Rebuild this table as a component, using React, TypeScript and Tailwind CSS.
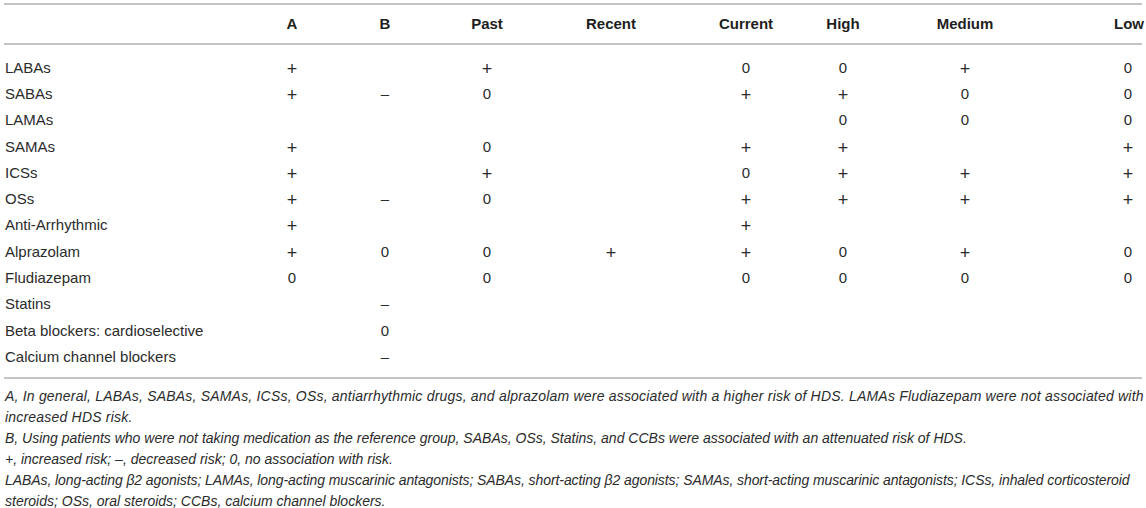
import React from "react";

const headers = ["A", "B", "Past", "Recent", "Current", "High", "Medium", "Low"];

const rows: [string, string[]][] = [
  ["LABAs", ["+", "", "+", "", "0", "0", "+", "0"]],
  ["SABAs", ["+", "–", "0", "", "+", "+", "0", "0"]],
  ["LAMAs", ["", "", "", "", "", "0", "0", "0"]],
  ["SAMAs", ["+", "", "0", "", "+", "+", "", "+"]],
  ["ICSs", ["+", "", "+", "", "0", "+", "+", "+"]],
  ["OSs", ["+", "–", "0", "", "+", "+", "+", "+"]],
  ["Anti-Arrhythmic", ["+", "", "", "", "+", "", "", ""]],
  ["Alprazolam", ["+", "0", "0", "+", "+", "0", "+", "0"]],
  ["Fludiazepam", ["0", "", "0", "", "0", "0", "0", "0"]],
  ["Statins", ["", "–", "", "", "", "", "", ""]],
  ["Beta blockers: cardioselective", ["", "0", "", "", "", "", "", ""]],
  ["Calcium channel blockers", ["", "–", "", "", "", "", "", ""]],
];

const gridCols =
  "grid grid-cols-[251px_74px_112px_92px_156px_114px_80px_164px_95px]";

function Val({ v }: { v: string }) {
  if (v === "+") {
    return <span className="text-[18px] leading-none align-[-2px]">+</span>;
  }
  return <>{v}</>;
}

function Cell({ v, last, header }: { v: string; last: boolean; header?: boolean }) {
  const content = header ? v : <Val v={v} />;
  if (last) {
    return (
      <div className="flex justify-end">
        <span className="w-[28px] text-center whitespace-nowrap">{content}</span>
      </div>
    );
  }
  return <div className="text-center whitespace-nowrap">{content}</div>;
}

export default function App() {
  return (
    <div
      className="bg-white w-[1146px] h-[508px] overflow-hidden text-[15px] text-[#2b2b2b]"
      style={{ fontFamily: '"Liberation Sans", Arial, Helvetica, sans-serif' }}
    >
      <div className="mx-[4px] mt-[3px] w-[1138px]">
        <div className="border-t-2 border-b-2 border-[#c4c4c4]">
          <div className={`${gridCols} h-[38px] items-center font-bold text-[#1e1e1e]`}>
            <div />
            {headers.map((h, i) => (
              <Cell key={h} v={h} header last={i === headers.length - 1} />
            ))}
          </div>
        </div>
        <div className="pt-[10px] pb-[7px] border-b-2 border-[#c4c4c4]">
          {rows.map(([label, vals]) => (
            <div key={label} className={`${gridCols} h-[26.27px] items-center`}>
              <div className="pl-px whitespace-nowrap">{label}</div>
              {vals.map((v, i) => (
                <Cell key={i} v={v} last={i === vals.length - 1} />
              ))}
            </div>
          ))}
        </div>
        <div className="pt-[7px] italic text-[14px] leading-[21px] pl-px whitespace-nowrap">
          <p className="tracking-[0.2px]">
            A, In general, LABAs, SABAs, SAMAs, ICSs, OSs, antiarrhythmic drugs, and alprazolam were associated with a higher risk of HDS. LAMAs Fludiazepam were not associated with
          </p>
          <p className="tracking-[0.2px]">increased HDS risk.</p>
          <p>
            B, Using patients who were not taking medication as the reference group, SABAs, OSs, Statins, and CCBs were associated with an attenuated risk of HDS.
          </p>
          <p>+, increased risk; –, decreased risk; 0, no association with risk.</p>
          <p className="tracking-[-0.08px]">
            LABAs, long-acting β2 agonists; LAMAs, long-acting muscarinic antagonists; SABAs, short-acting β2 agonists; SAMAs, short-acting muscarinic antagonists; ICSs, inhaled corticosteroid
          </p>
          <p>steroids; OSs, oral steroids; CCBs, calcium channel blockers.</p>
        </div>
      </div>
    </div>
  );
}
